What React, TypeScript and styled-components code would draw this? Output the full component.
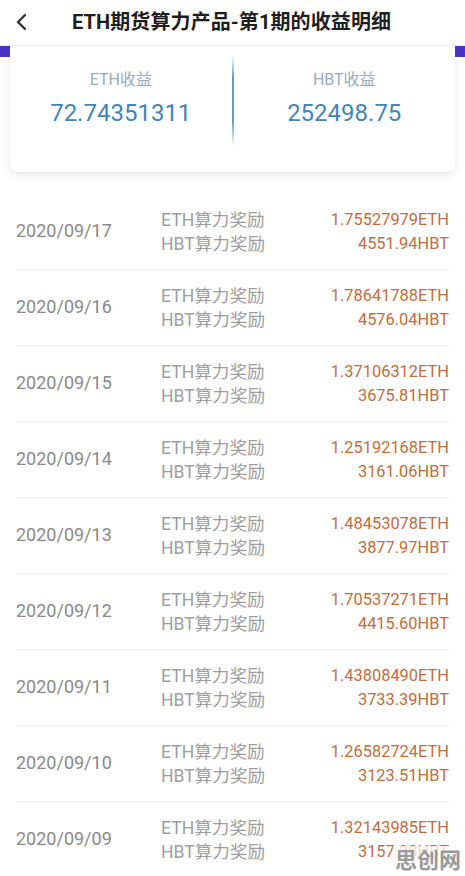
import React from "react";
import styled, { createGlobalStyle } from "styled-components";

const Global = createGlobalStyle`
  html, body { margin: 0; padding: 0; background: #fff; }
  body { font-family: Roboto, "Noto Sans CJK SC", sans-serif; }
  * { box-sizing: border-box; }
`;

const Page = styled.div`
  width: 465px;
  min-height: 876px;
  background: #fff;
  position: relative;
  overflow: hidden;
`;

const Header = styled.header`
  height: 46px;
  display: flex;
  align-items: center;
  position: relative;
  border-bottom: 1px solid #ececec;
`;

const Back = styled.button`
  width: 46px;
  height: 40px;
  border: 0;
  background: transparent;
  padding: 0 0 0 14px;
  display: flex;
  align-items: center;
  margin-top: -2px;
`;

const Title = styled.h1`
  flex: 1;
  margin: -5px 0 0 26px;
  font-size: 20px;
  font-weight: 700;
  color: #1e1e1e;
  letter-spacing: 0.1px;
`;

const Hero = styled.section`
  padding: 0 10px;
  background: linear-gradient(#4a34c8 0 11px, #fff 11px);
`;

const Card = styled.div`
  height: 126px;
  background: #fff;
  border-radius: 0 0 8px 8px;
  box-shadow: 0 5px 10px rgba(0, 0, 0, 0.07), 0 1px 3px rgba(0, 0, 0, 0.04);
  display: grid;
  grid-template-columns: 1fr 2px 1fr;
  align-items: center;
`;

const Stat = styled.div`
  display: flex;
  flex-direction: column;
  align-items: center;
  margin-top: -20px;
`;

const StatLabel = styled.div`
  font-size: 16px;
  color: #97abb9;
  line-height: 20px;
`;

const StatValue = styled.div`
  font-size: 24px;
  color: #4485b3;
  line-height: 30px;
  margin-top: 8px;
`;

const Divider = styled.div`
  width: 2px;
  height: 92px;
  align-self: start;
  margin-top: 9px;
  background: linear-gradient(
    rgba(90, 143, 176, 0),
    rgba(90, 143, 176, 0.9) 25%,
    rgba(90, 143, 176, 0.9) 70%,
    rgba(90, 143, 176, 0)
  );
`;

const List = styled.div`
  margin-top: 22px;
  padding: 0 16px;
`;

const Row = styled.div`
  height: 76px;
  display: grid;
  grid-template-columns: 145px 1fr auto;
  align-items: center;
  border-bottom: 1px solid #f1f1f1;
`;

const DateText = styled.div`
  font-size: 18px;
  color: #8a8a8a;
  padding-bottom: 2px;
`;

const Lines = styled.div`
  display: flex;
  flex-direction: column;
  line-height: 24px;
`;

const Label = styled.div`
  font-size: 17.6px;
  color: #9e9e9e;
`;

const Amount = styled.div`
  font-size: 16.4px;
  color: #c36c3d;
  text-align: right;
  line-height: 24px;
`;

const Watermark = styled.div`
  position: absolute;
  right: 2px;
  bottom: 2px;
  padding: 0 2px;
  font-size: 22px;
  font-weight: 700;
  color: #9a9a9a;
  background: rgba(255, 255, 255, 0.75);
  line-height: 30px;
`;

const rows = [
  ["2020/09/17", "1.75527979", "4551.94"],
  ["2020/09/16", "1.78641788", "4576.04"],
  ["2020/09/15", "1.37106312", "3675.81"],
  ["2020/09/14", "1.25192168", "3161.06"],
  ["2020/09/13", "1.48453078", "3877.97"],
  ["2020/09/12", "1.70537271", "4415.60"],
  ["2020/09/11", "1.43808490", "3733.39"],
  ["2020/09/10", "1.26582724", "3123.51"],
  ["2020/09/09", "1.32143985", "3157.28"],
];

export default function App() {
  return (
    <Page>
      <Global />
      <Header>
        <Back aria-label="back">
          <svg width="14" height="18" viewBox="0 0 14 18">
            <path d="M11 2 L4 9 L11 16" fill="none" stroke="#333" strokeWidth="2.4" strokeLinecap="round" strokeLinejoin="round" />
          </svg>
        </Back>
        <Title>ETH期货算力产品-第1期的收益明细</Title>
      </Header>
      <Hero>
        <Card>
          <Stat>
            <StatLabel>ETH收益</StatLabel>
            <StatValue>72.74351311</StatValue>
          </Stat>
          <Divider />
          <Stat>
            <StatLabel>HBT收益</StatLabel>
            <StatValue>252498.75</StatValue>
          </Stat>
        </Card>
      </Hero>
      <List>
        {rows.map(([d, eth, hbt]) => (
          <Row key={d}>
            <DateText>{d}</DateText>
            <Lines>
              <Label>ETH算力奖励</Label>
              <Label>HBT算力奖励</Label>
            </Lines>
            <Lines>
              <Amount>{eth}ETH</Amount>
              <Amount>{hbt}HBT</Amount>
            </Lines>
          </Row>
        ))}
      </List>
      <Watermark>思创网</Watermark>
    </Page>
  );
}
